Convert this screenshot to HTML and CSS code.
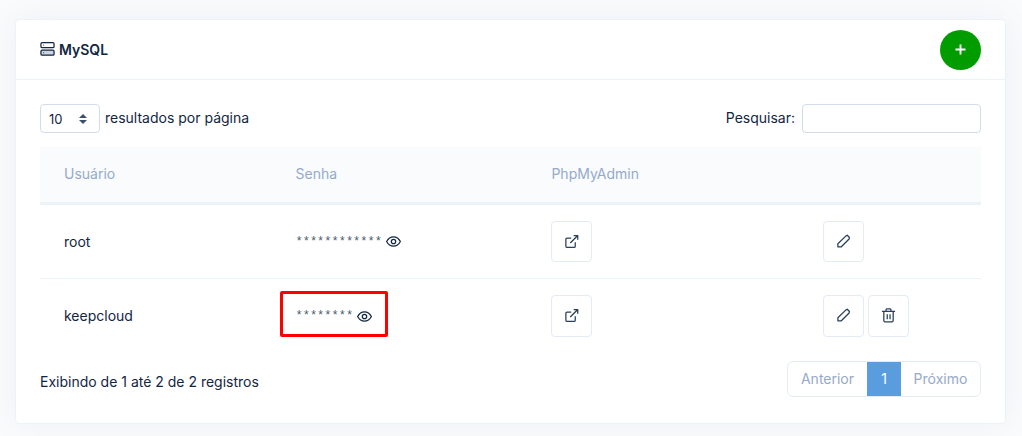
FILE: index.html
```html
<!DOCTYPE html>
<html lang="pt-BR">
<head>
<meta charset="utf-8">
<meta name="viewport" content="width=device-width, initial-scale=1">
<title>MySQL</title>
<link rel="stylesheet" href="styles.css">
</head>
<body>
<svg class="sprite" aria-hidden="true">
  <symbol id="eye" viewBox="0 0 24 24"><path d="M1 12s4-7.500 11-7.500S23 12 23 12s-4 7.500-11 7.500S1 12 1 12z"/><circle cx="12" cy="12" r="3.500"/></symbol>
  <symbol id="external" viewBox="0 0 24 24"><path d="M18 13v6.500a2 2 0 0 1-2 2H5a2 2 0 0 1-2-2V8.500a2 2 0 0 1 2-2h6.500"/><path d="M15.500 2.500H22V9M10 14.500l12-12"/></symbol>
  <symbol id="pencil" viewBox="0 0 24 24"><path d="M16 3l2-1 3.500 3.500-.5 2.500L8.500 20.500H3V15.500z"/></symbol>
  <symbol id="trash" viewBox="0 0 24 24"><path d="M1.500 5.500h21M4.500 6v14a2 2 0 0 0 2 2h11a2 2 0 0 0 2-2V6M8 5V3a1.500 1.500 0 0 1 1.500-1.500h5A1.500 1.500 0 0 1 16 3v2M10 10v8M14.500 10v8"/></symbol>
</svg>
<main class="card">
  <header class="card-header">
    <h1 class="card-title">
      <svg class="icon" viewBox="0 0 24 24" aria-hidden="true"><rect x="1.500" y="1" width="21" height="8" rx="2"/><rect class="shaded" x="1.500" y="13" width="21" height="8" rx="2"/><path d="M5.500 5h1M5.500 17h1"/></svg>
      MySQL
    </h1>
    <button class="add" type="button" aria-label="Adicionar"><svg class="icon" viewBox="0 0 24 24" aria-hidden="true"><path d="M12 4v16M4 12h16"/></svg></button>
  </header>
  <div class="card-body">
    <div class="toolbar">
      <label class="field"><span class="select-wrap"><select class="control length"><option>10</option><option>25</option><option>50</option></select><svg class="arrows" viewBox="0 0 8 10" aria-hidden="true"><path d="M0 4l4-4 4 4zM0 6h8l-4 4z"/></svg></span><span class="field-text">resultados por página</span></label>
      <label class="field search-field"><span class="field-text">Pesquisar:</span><input class="control search" type="search"></label>
    </div>
    <table class="table">
      <colgroup><col class="col-user"><col class="col-password"><col class="col-admin"><col></colgroup>
      <thead><tr><th>Usuário</th><th>Senha</th><th>PhpMyAdmin</th><th></th></tr></thead>
      <tbody>
        <tr>
          <td>root</td>
          <td><span class="password"><span class="mask">************</span><button class="reveal" type="button" aria-label="Mostrar senha"><svg class="icon"><use href="#eye"/></svg></button></span></td>
          <td><a class="action" href="#" aria-label="Abrir PhpMyAdmin"><svg class="icon"><use href="#external"/></svg></a></td>
          <td><div class="actions"><button class="action" type="button" aria-label="Editar"><svg class="icon"><use href="#pencil"/></svg></button></div></td>
        </tr>
        <tr>
          <td>keepcloud</td>
          <td><span class="password highlighted"><span class="mask">********</span><button class="reveal" type="button" aria-label="Mostrar senha"><svg class="icon"><use href="#eye"/></svg></button></span></td>
          <td><a class="action" href="#" aria-label="Abrir PhpMyAdmin"><svg class="icon"><use href="#external"/></svg></a></td>
          <td><div class="actions"><button class="action" type="button" aria-label="Editar"><svg class="icon"><use href="#pencil"/></svg></button><button class="action" type="button" aria-label="Excluir"><svg class="icon"><use href="#trash"/></svg></button></div></td>
        </tr>
      </tbody>
    </table>
    <footer class="table-footer">
      <p class="info">Exibindo de 1 até 2 de 2 registros</p>
      <nav class="pagination" aria-label="Paginação"><a class="page" href="#">Anterior</a><a class="page current" href="#" aria-current="page">1</a><a class="page" href="#">Próximo</a></nav>
    </footer>
  </div>
</main>
</body>
</html>
```
FILE: styles.css
```css
* { box-sizing: border-box; }

body {
  margin: 0;
  padding: 19px 16px 12px 15px;
  background: #f9fbfd;
  color: #12263f;
  font: 14px/24px Inter, Lato, sans-serif;
}

button, input, select { font: inherit; color: inherit; }

.sprite { position: absolute; width: 0; height: 0; }

.icon {
  display: block;
  width: 15px;
  height: 15px;
  fill: none;
  stroke: currentColor;
  stroke-width: 2;
  stroke-linejoin: round;
}

.shaded { fill: #cdd5e0; }

.card {
  border: 1px solid #edf2f9;
  border-radius: 4px;
  background: #fff;
  box-shadow: 0 0 36px rgba(18, 38, 63, 0.05);
}

.card-header {
  display: flex;
  align-items: center;
  justify-content: space-between;
  height: 60px;
  padding: 0 24px;
  border-bottom: 1px solid #edf2f9;
}

.card-title {
  display: flex;
  align-items: center;
  gap: 4px;
  margin: 0;
  font-size: 14px;
  font-weight: 600;
}

.add {
  display: grid;
  place-items: center;
  width: 41px;
  height: 40px;
  padding: 0;
  border: 0;
  border-radius: 50%;
  background: #009c00;
  color: #fff;
}

.add .icon { stroke-width: 3; }

.card-body { padding: 24px 24px 26px; }

.toolbar {
  display: flex;
  justify-content: space-between;
  margin-bottom: 14px;
}

.field { display: flex; align-items: center; gap: 5px; }
.search-field { gap: 7px; }
.field-text { padding-bottom: 2px; }

.control {
  height: 29px;
  border: 1px solid #d2ddec;
  border-radius: 4px;
  background: #fff;
}

.select-wrap { display: grid; align-items: center; }

.length {
  grid-area: 1 / 1;
  width: 60px;
  padding: 0 8px;
  appearance: none;
  font-size: 13px;
}

.arrows {
  grid-area: 1 / 1;
  justify-self: end;
  width: 8px;
  height: 10px;
  margin-right: 13px;
  fill: #3b506c;
  pointer-events: none;
}

.search { width: 179px; padding: 0 8px; appearance: none; }

.table {
  width: 100%;
  border-collapse: separate;
  border-spacing: 0;
  table-layout: fixed;
}

.col-user { width: 24.6%; }
.col-password { width: 27.2%; }
.col-admin { width: 28.9%; }

.table th {
  padding: 15px 24px 16px;
  border-bottom: 3px solid #edf2f9;
  background: #f9fbfd;
  color: #95aac9;
  font-weight: 400;
  text-align: left;
}

.table td { padding: 16px 24px; vertical-align: middle; }
.table tbody tr + tr td { border-top: 1px solid #edf2f9; padding-bottom: 0; }

.password { display: flex; align-items: center; gap: 4px; width: fit-content; }
.highlighted { position: relative; }

.highlighted::after {
  content: "";
  position: absolute;
  inset: -13px -16px -9px -15px;
  border: 3px solid #f00;
  border-radius: 2px;
  pointer-events: none;
}

.mask { font: 12px/24px "Liberation Mono", monospace; color: #4a5a70; }

.reveal { padding: 0; border: 0; background: none; }

.action {
  display: grid;
  place-items: center;
  width: 41px;
  height: 41px;
  padding: 0 0 1px;
  border: 1px solid #e3ebf6;
  border-radius: 4px;
  background: #fff;
  color: #283e59;
}

.table tbody tr + tr .action { height: 42px; }

.actions { display: flex; gap: 4px; }

.table-footer {
  display: flex;
  align-items: center;
  justify-content: space-between;
  margin-top: 24px;
}

.info { margin: 0; padding-top: 6px; }

.pagination {
  display: flex;
  overflow: hidden;
  border: 1px solid #e3ebf6;
  border-radius: 6px;
}

.page {
  min-width: 79px;
  padding: 5px 12px;
  color: #95aac9;
  text-align: center;
  text-decoration: none;
}

.current {
  min-width: 34px;
  margin: -1px 0;
  padding: 6px 12px;
  background: #5a9ddf;
  color: #fff;
}
```
